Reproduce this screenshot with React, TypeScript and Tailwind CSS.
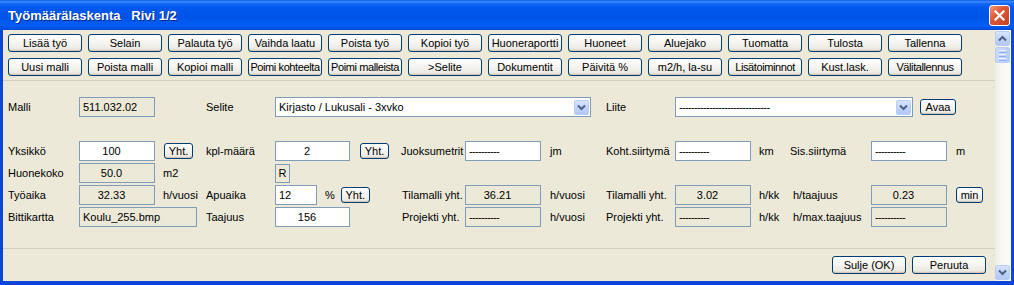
import React from "react";

const btnBase =
  "flex items-center justify-center whitespace-nowrap rounded-[3px] border border-[#003C74] bg-[linear-gradient(to_bottom,#FFFFFF_0%,#F6F5F1_45%,#ECEAE2_85%,#D9D3C7_100%)] text-[11px] leading-none text-black shadow-[inset_0_-1px_0_#D0C9BC]";

function Btn({ label, w = "w-[74px]", h = "h-[18px]", tight = false }: { label: string; w?: string; h?: string; tight?: boolean }) {
  return <div className={`${btnBase} ${w} ${h} ${tight ? "tracking-[-0.4px]" : ""}`}>{label}</div>;
}

function Chevron({ color = "#4D6185" }: { color?: string }) {
  return (
    <svg width="9" height="7" viewBox="0 0 9 7">
      <path d="M1 1.5 L4.5 5 L8 1.5" fill="none" stroke={color} strokeWidth="2" />
    </svg>
  );
}

function DropBtn() {
  return (
    <div className="flex h-[15px] w-[15px] items-center justify-center rounded-[2px] border border-[#B8CCF4] bg-[linear-gradient(to_bottom,#D8E4FD_0%,#C2D4FB_50%,#B3C8F6_100%)]">
      <Chevron />
    </div>
  );
}

function Field({
  children,
  white = false,
  align = "center",
  w = "w-[76px]",
}: {
  children?: React.ReactNode;
  white?: boolean;
  align?: "center" | "left";
  w?: string;
}) {
  return (
    <div
      className={`flex h-[20px] ${w} items-center border border-[#7F9DB9] text-[11px] leading-none ${
        white ? "bg-white" : "bg-[#ECE9D8]"
      } ${align === "center" ? "justify-center pr-[11px]" : "justify-start pl-[3px]"}`}
    >
      {children}
    </div>
  );
}

const Dashes = ({ n = 10 }: { n?: number }) => <span className="tracking-[-0.65px]">{"-".repeat(n)}</span>;

function Lbl({ children, pl = "" }: { children?: React.ReactNode; pl?: string }) {
  return <div className={`flex h-[20px] items-center whitespace-nowrap text-[11px] leading-none ${pl}`}>{children}</div>;
}

export default function App() {
  const row1 = ["Lisää työ", "Selain", "Palauta työ", "Vaihda laatu", "Poista työ", "Kopioi työ", "Huoneraportti", "Huoneet", "Aluejako", "Tuomatta", "Tulosta", "Tallenna"];
  const row2 = ["Uusi malli", "Poista malli", "Kopioi malli", "Poimi kohteelta", "Poimi malleista", ">Selite", "Dokumentit", "Päivitä %", "m2/h, la-su", "Lisätoiminnot", "Kust.lask.", "Välitallennus"];

  return (
    <div className="flex h-[285px] w-[1014px] flex-col overflow-hidden bg-[#0B46D8] font-['Liberation_Sans','Arial',sans-serif] text-black">
      {/* Title bar */}
      <div className="flex h-[30px] items-center justify-between bg-[linear-gradient(to_bottom,#0A5AE8_0%,#3E8DFF_6%,#1468F5_12%,#0058EE_25%,#0055E8_60%,#005DF5_85%,#0048D6_100%)] pl-[8px] pr-[4px]">
        <div className="whitespace-pre text-[13px] font-bold leading-none text-white [text-shadow:1px_1px_0_#0A2A8A]">
          {"Työmäärälaskenta   Rivi 1/2"}
        </div>
        <div className="flex h-[21px] w-[21px] items-center justify-center rounded-[3px] border border-white bg-[linear-gradient(135deg,#F09A7E_0%,#E0583A_40%,#C8401F_100%)]">
          <svg width="11" height="11" viewBox="0 0 11 11">
            <path d="M1.5 1.5 L9.5 9.5 M9.5 1.5 L1.5 9.5" stroke="white" strokeWidth="2.2" strokeLinecap="square" />
          </svg>
        </div>
      </div>

      {/* Body */}
      <div className="flex flex-1 pb-[4px] pl-[3px] pr-[3px]">
        <div className="flex flex-1 bg-[#ECE9D8]">
          {/* Main area */}
          <div className="flex flex-1 flex-col">
            <div className="flex flex-col gap-[6px] pl-[5px] pt-[4px]">
              <div className="flex gap-[6px]">
                {row1.map((l) => (
                  <Btn key={l} label={l} />
                ))}
              </div>
              <div className="flex gap-[6px]">
                {row2.map((l) => (
                  <Btn key={l} label={l} tight={l.startsWith("Poimi") || l === "Lisätoiminnot" || l === "Välitallennus"} />
                ))}
              </div>
            </div>
            <div className="mt-[4px] border-t border-[#D2CFBF]" />

            {/* Form grid */}
            <div className="mt-[16px] grid grid-cols-[71px_76px_51px_69px_75px_51px_64px_76px_65px_69px_76px_39px_81px_76px_1fr] grid-rows-[20px_20px_20px_20px_20px_20px] gap-y-[2px] pl-[5px]">
              {/* Row 1 */}
              <Lbl>Malli</Lbl>
              <Field align="left">511.032.02</Field>
              <div />
              <Lbl>Selite</Lbl>
              <div className="col-span-5 flex">
                <div className="flex h-[20px] w-[316px] items-center justify-between border border-[#7F9DB9] bg-white pl-[3px] pr-[1px] text-[11px] leading-none">
                  <span>Kirjasto / Lukusali - 3xvko</span>
                  <DropBtn />
                </div>
              </div>
              <Lbl>Liite</Lbl>
              <div className="col-span-5 flex items-center gap-[7px]">
                <div className="flex h-[20px] w-[238px] items-center justify-between border border-[#7F9DB9] bg-white pl-[3px] pr-[1px] text-[11px] leading-none">
                  <Dashes n={30} />
                  <DropBtn />
                </div>
                <Btn label="Avaa" w="w-[36px]" h="h-[16px]" />
              </div>

              {/* Row 2 empty */}
              <div className="col-span-15" />

              {/* Row 3 */}
              <Lbl>Yksikkö</Lbl>
              <Field white>100</Field>
              <div className="flex items-center pl-[9px]">
                <Btn label="Yht." w="w-[29px]" h="h-[16px]" />
              </div>
              <Lbl>kpl-määrä</Lbl>
              <Field white w="w-[75px]">2</Field>
              <div className="flex items-center pl-[10px]">
                <Btn label="Yht." w="w-[29px]" h="h-[16px]" />
              </div>
              <Lbl>Juoksumetrit</Lbl>
              <Field white align="left">
                <Dashes />
              </Field>
              <Lbl pl="pl-[9px]">jm</Lbl>
              <Lbl>Koht.siirtymä</Lbl>
              <Field white align="left">
                <Dashes />
              </Field>
              <Lbl pl="pl-[8px]">km</Lbl>
              <Lbl>Sis.siirtymä</Lbl>
              <Field white align="left">
                <Dashes />
              </Field>
              <Lbl pl="pl-[9px]">m</Lbl>

              {/* Row 4 */}
              <Lbl>Huonekoko</Lbl>
              <Field>50.0</Field>
              <Lbl pl="pl-[8px]">m2</Lbl>
              <div />
              <div className="col-span-11 flex items-center">
                <div className="flex h-[19px] w-[15px] items-center justify-center border border-[#7F9DB9] bg-[#ECE9D8] text-[11px] leading-none">
                  R
                </div>
              </div>

              {/* Row 5 */}
              <Lbl>Työaika</Lbl>
              <Field>32.33</Field>
              <Lbl pl="pl-[8px]">h/vuosi</Lbl>
              <Lbl>Apuaika</Lbl>
              <div className="col-span-2 flex items-center">
                <Field white align="left" w="w-[42px]">
                  12
                </Field>
                <span className="ml-[8px] text-[11px] leading-none">%</span>
                <div className="ml-[6px]">
                  <Btn label="Yht." w="w-[29px]" h="h-[16px]" />
                </div>
              </div>
              <Lbl pl="pl-[1px]">Tilamalli yht.</Lbl>
              <Field>36.21</Field>
              <Lbl pl="pl-[9px]">h/vuosi</Lbl>
              <Lbl>Tilamalli yht.</Lbl>
              <Field>3.02</Field>
              <Lbl pl="pl-[8px]">h/kk</Lbl>
              <Lbl pl="pl-[3px]">h/taajuus</Lbl>
              <Field>0.23</Field>
              <div className="flex items-center pl-[9px]">
                <Btn label="min" w="w-[27px]" h="h-[16px]" />
              </div>

              {/* Row 6 */}
              <Lbl>Bittikartta</Lbl>
              <div className="col-span-2 flex">
                <Field align="left" w="w-[118px]">
                  Koulu_255.bmp
                </Field>
              </div>
              <Lbl>Taajuus</Lbl>
              <Field white w="w-[75px]">156</Field>
              <div />
              <Lbl pl="pl-[1px]">Projekti yht.</Lbl>
              <Field align="left">
                <Dashes />
              </Field>
              <Lbl pl="pl-[9px]">h/vuosi</Lbl>
              <Lbl>Projekti yht.</Lbl>
              <Field align="left">
                <Dashes />
              </Field>
              <Lbl pl="pl-[8px]">h/kk</Lbl>
              <Lbl pl="pl-[3px]">h/max.taajuus</Lbl>
              <Field align="left">
                <Dashes />
              </Field>
              <div />
            </div>

            <div className="mt-[21px] border-t border-[#D2CFBF]" />
            <div className="flex justify-end gap-[6px] pr-[9px] pt-[7px]">
              <Btn label="Sulje (OK)" />
              <Btn label="Peruuta" />
            </div>
          </div>

          {/* Scrollbar */}
          <div className="flex w-[16px] flex-col justify-between bg-[linear-gradient(to_right,#EEEDE5_0%,#F6F5F0_30%,#FDFDFB_100%)] pb-[1px] pt-[1px]">
            <div className="flex flex-col gap-[1px]">
              <div className="flex h-[15px] w-[15px] items-center justify-center rounded-[2px] border border-[#B8CCF4] bg-[linear-gradient(to_bottom,#D8E4FD_0%,#C2D4FB_50%,#B3C8F6_100%)]">
                <svg width="9" height="7" viewBox="0 0 9 7">
                  <path d="M1 5.5 L4.5 2 L8 5.5" fill="none" stroke="#4D6185" strokeWidth="2" />
                </svg>
              </div>
              <div className="flex h-[16px] w-[15px] flex-col items-center justify-center gap-[1px] rounded-[2px] border border-[#B8CCF4] bg-[linear-gradient(to_right,#CADAFC_0%,#C2D4FB_50%,#B6CAF7_100%)]">
                <div className="h-[1px] w-[7px] bg-[#EEF4FE]" />
                <div className="h-[1px] w-[7px] bg-[#8CB0F8]" />
                <div className="h-[1px] w-[7px] bg-[#EEF4FE]" />
                <div className="h-[1px] w-[7px] bg-[#8CB0F8]" />
                <div className="h-[1px] w-[7px] bg-[#EEF4FE]" />
                <div className="h-[1px] w-[7px] bg-[#8CB0F8]" />
              </div>
            </div>
            <div className="flex h-[15px] w-[15px] items-center justify-center rounded-[2px] border border-[#B8CCF4] bg-[linear-gradient(to_bottom,#D8E4FD_0%,#C2D4FB_50%,#B3C8F6_100%)]">
              <Chevron />
            </div>
          </div>
        </div>
      </div>
    </div>
  );
}
